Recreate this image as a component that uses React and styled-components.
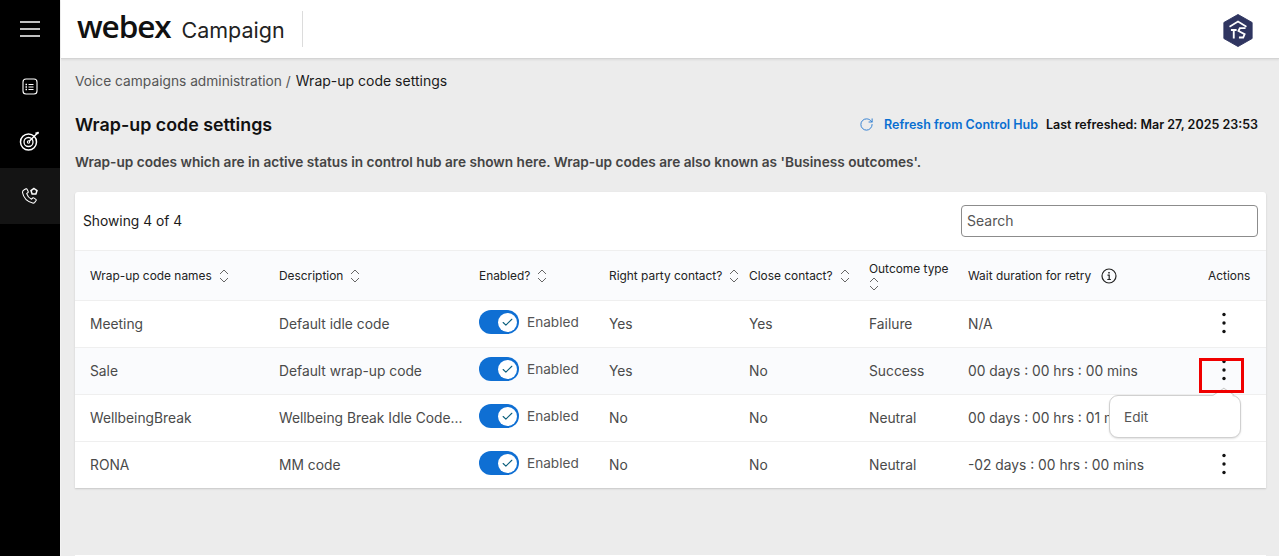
import React from 'react';
import styled, { createGlobalStyle } from 'styled-components';
import { Check, RotateCw } from 'lucide-react';

const GlobalStyle = createGlobalStyle`
  html, body {
    margin: 0;
    height: 100%;
    overflow: hidden;
    background: #ececec;
    font-family: Inter, "Liberation Sans", sans-serif;
  }
  * { box-sizing: border-box; }
`;

const Shell = styled.div`
  display: flex;
  width: 1279px;
  height: 556px;
  overflow: hidden;
`;

const Sidebar = styled.nav`
  flex: 0 0 60px;
  background: #000;
  display: flex;
  flex-direction: column;
`;

const NavItem = styled.div`
  height: ${(p) => p.$height || 56}px;
  background: ${(p) => (p.$active ? '#141414' : 'transparent')};
  display: flex;
  align-items: center;
  justify-content: center;
  color: #fff;
`;

const Main = styled.div`
  flex: 1;
  min-width: 0;
  display: flex;
  flex-direction: column;
  border-left: 1px solid #f3f3f3;
`;

const TopBar = styled.header`
  height: 59px;
  flex: none;
  background: #fff;
  border-bottom: 1px solid #d4d4d4;
  box-shadow: 0 1px 2px rgba(0, 0, 0, 0.08);
  display: flex;
  align-items: center;
  padding: 0 25px 0 16px;
`;

const Brand = styled.div`
  display: flex;
  align-items: baseline;
  height: 36px;
  padding-right: 17px;
  border-right: 1px solid #dcdcdc;
  color: #111;
`;

const BrandMark = styled.span`
  font-size: 31.5px;
  line-height: 30px;
  font-weight: 600;
  letter-spacing: -1.1px;
  font-family: "Open Sans", Inter, sans-serif;
`;

const BrandName = styled.span`
  font-size: 21.5px;
  line-height: 36px;
  margin-left: 11px;
  color: #222;
`;

const Avatar = styled.div`
  margin-left: auto;
  margin-top: 3px;
  display: flex;
`;

const Content = styled.div`
  padding: 0 13px 0 14px;
`;

const Breadcrumb = styled.div`
  height: 44px;
  padding-top: 13px;
  display: flex;
  align-items: baseline;
  font-size: 13.75px;
  color: #555;

  b {
    font-size: 14px;
    font-weight: 400;
    color: #1a1a1a;
    margin-left: 5px;
  }
`;

const TitleRow = styled.div`
  display: flex;
  align-items: center;
  height: 42px;
`;

const Title = styled.h1`
  margin: 0;
  font-size: 17.85px;
  font-weight: 600;
  color: #111;
`;

const Refresh = styled.div`
  margin-left: auto;
  padding-right: 8px;
  display: flex;
  align-items: center;
  font-size: 12.5px;
  font-weight: 600;
  color: #111;
`;

const RefreshLink = styled.span`
  color: #0a6fd1;
  margin: 0 8px 0 10px;
`;

const Note = styled.p`
  margin: 0;
  height: 34px;
  display: flex;
  align-items: center;
  font-size: 13.65px;
  font-weight: 600;
  color: #444;
`;

const Card = styled.section`
  margin-top: 13px;
  background: #fff;
  border-radius: 3px 3px 0 0;
  box-shadow: 0 1px 2px rgba(0, 0, 0, 0.16);
`;

const Toolbar = styled.div`
  height: 58px;
  display: flex;
  align-items: center;
  justify-content: space-between;
  padding: 0 8px 1px 8px;
  font-size: 13.8px;
  color: #1a1a1a;
`;

const SearchBox = styled.div`
  width: 297px;
  height: 32px;
  margin-top: 1px;
  border: 1px solid #8c8c8c;
  border-radius: 4px;
  display: flex;
  align-items: center;
  padding: 0 0 1px 5px;
  font-size: 14px;
  color: #555;
`;

const Row = styled.div`
  display: grid;
  grid-template-columns: 189px 200px 130px 140px 120px 99px 240px 71px;
  height: ${(p) => (p.$head ? 50 : 47)}px;
  background: ${(p) => (p.$tinted ? '#fafbfd' : '#fff')};
  border-top: 1px solid #efefef;
  align-items: center;
`;

const Cell = styled.div`
  position: relative;
  padding-left: 15px;
  font-size: 13.8px;
  color: #4a4a4a;
  white-space: nowrap;
  display: flex;
  align-items: center;
`;

const HeadCell = styled(Cell)`
  font-size: 11.9px;
  color: #222;
  gap: 7px;
  flex-wrap: ${(p) => (p.$stacked ? 'wrap' : 'nowrap')};
  row-gap: 1px;

  svg {
    flex: none;
  }
`;

const SwitchTrack = styled.span`
  width: 40px;
  height: 24px;
  margin: -4px 8px 0 0;
  border-radius: 12px;
  background: #0f6fd3;
  display: flex;
  align-items: center;
  justify-content: flex-end;
  padding-right: 2px;
`;

const SwitchKnob = styled.span`
  width: 19px;
  height: 19px;
  border-radius: 50%;
  background: #fff;
  display: flex;
  align-items: center;
  justify-content: center;
  color: #0b5f7d;
`;

const SwitchLabel = styled.span`
  font-size: 13.6px;
  color: #555;
  margin-top: -4px;
`;

const KebabButton = styled.span`
  display: flex;
  margin: -2px 0 0 13px;
`;

const Marker = styled.span`
  position: absolute;
  z-index: 3;
  left: 6px;
  top: -3px;
  width: 45px;
  height: 35px;
  border: 3px solid #f00000;
`;

const Popover = styled.div`
  position: absolute;
  z-index: 2;
  right: 23px;
  top: 34px;
  width: 132px;
  height: 43px;
  background: #fff;
  border: 1.5px solid #d0d0d0;
  border-radius: 9px;
  box-shadow: 0 1px 2px rgba(0, 0, 0, 0.12);
  display: flex;
  align-items: center;
  padding-left: 14px;
  font-size: 13.6px;
  color: #555;

  &::before {
    content: '';
    position: absolute;
    right: 11px;
    top: -8px;
    width: 11px;
    height: 13px;
    background: #fff;
    border-top: 1.5px solid #c8c8c8;
    border-left: 1.5px solid #c8c8c8;
    transform: rotate(45deg) skew(-12deg, -12deg);
  }
`;

const PageFoot = styled.div`
  height: 1px;
  margin-top: 67px;
  background: #fff;
`;

const SortIcon = () => (
  <svg width="10" height="14" viewBox="0 0 10 14" fill="none" stroke="#666" strokeWidth="1">
    <path d="M1 5l4-4 4 4M1 9l4 4 4-4" />
  </svg>
);

const KebabIcon = () => (
  <svg width="6" height="22" viewBox="0 0 6 22" fill="#111">
    <circle cx="3" cy="2.500" r="1.700" />
    <circle cx="3" cy="11" r="1.700" />
    <circle cx="3" cy="19.500" r="1.700" />
  </svg>
);

const MenuIcon = () => (
  <svg width="20" height="16" viewBox="0 0 20 16" stroke="#fff" strokeWidth="1.6">
    <path d="M0 1h20M0 8h20M0 15h20" />
  </svg>
);

const ListIcon = () => (
  <svg width="16" height="17" viewBox="0 0 16 17" fill="none" stroke="#fff" strokeWidth="1.1">
    <rect x="1" y="1" width="14" height="15" rx="3" />
    <path d="M6.500 6.500h5M6.500 9h5M6.500 11.500h5" />
    <path d="M3.500 6.500h1.500M3.500 9h1.500M3.500 11.500h1.500" strokeWidth="1.400" />
  </svg>
);

const TargetIcon = () => (
  <svg width="22" height="22" viewBox="0 0 22 22" fill="none" stroke="#fff">
    <circle cx="9.500" cy="12" r="8" strokeWidth="1.500" />
    <circle cx="9.500" cy="12" r="4.500" strokeWidth="1.300" />
    <circle cx="9.500" cy="12" r="1.200" strokeWidth="1.100" />
    <path d="M10 11.500L19.500 2" strokeWidth="1.500" />
    <path d="M16.500 3.500l3-.5" strokeWidth="2" />
  </svg>
);

const PhoneIcon = () => (
  <svg width="18" height="18" viewBox="0 0 18 18" fill="none" stroke="#fff" strokeWidth="1.100">
    <path d="M3.200 2.800L5 1.800c.4-.2.800 0 1 .4l1.200 2.300c.2.400.1.800-.2 1L5.700 6.600c.7 2.300 2.500 4.500 4.800 5.600l1.200-1.200c.3-.3.700-.3 1-.1l2.200 1.500c.4.300.5.800.2 1.100l-1.400 1.800c-.5.600-1.300.9-2.100.7C6.500 14.700 2.500 10.500 1.500 5.500c-.2-1.100.6-2.100 1.700-2.700z" />
    <path d="M13 1.500l3 2.100-1.100 3.300h-3.800L10 3.600z" strokeWidth="1.500" />
  </svg>
);

const HexLogo = () => (
  <svg width="32" height="35" viewBox="0 0 34 36">
    <path d="M17 1L32 9.500V26.500L17 35L2 26.500V9.500z" fill="#2f3560" stroke="#2f3560" strokeLinejoin="round" />
    <path d="M8 14L17 8.500l9 5.500" fill="none" stroke="#fff" strokeWidth="1.800" />
    <path d="M9.500 17.500h6M12.500 17.500v9" fill="none" stroke="#fff" strokeWidth="2" />
    <path d="M25 15.500h-6l-1.500 3 6.500 3.500-1.500 3.500H18" fill="none" stroke="#fff" strokeWidth="2" />
  </svg>
);

const InfoIcon = () => (
  <svg width="16" height="16" viewBox="0 0 16 16" fill="none" stroke="#222" strokeWidth="1.200">
    <circle cx="8" cy="8" r="7" />
    <path d="M6.500 7.200H8.200V11.500M6.300 11.500h3.600" />
    <path d="M8 4v1.400" strokeWidth="1.500" />
  </svg>
);

const columns = [
  'Wrap-up code names',
  'Description',
  'Enabled?',
  'Right party contact?',
  'Close contact?',
];

const rows = [
  { name: 'Meeting', description: 'Default idle code', rpc: 'Yes', close: 'Yes', outcome: 'Failure', wait: 'N/A' },
  { name: 'Sale', description: 'Default wrap-up code', rpc: 'Yes', close: 'No', outcome: 'Success', wait: '00 days : 00 hrs : 00 mins', open: true },
  { name: 'WellbeingBreak', description: 'Wellbeing Break Idle Code...', rpc: 'No', close: 'No', outcome: 'Neutral', wait: '00 days : 00 hrs : 01 mins', hidden: true },
  { name: 'RONA', description: 'MM code', rpc: 'No', close: 'No', outcome: 'Neutral', wait: '-02 days : 00 hrs : 00 mins' },
];

const App = () => (
  <Shell>
    <GlobalStyle />
    <Sidebar>
      <NavItem $height={58}><MenuIcon /></NavItem>
      <NavItem><ListIcon /></NavItem>
      <NavItem $height={54}><TargetIcon /></NavItem>
      <NavItem $active><PhoneIcon /></NavItem>
    </Sidebar>
    <Main>
      <TopBar>
        <Brand>
          <BrandMark>webex</BrandMark>
          <BrandName>Campaign</BrandName>
        </Brand>
        <Avatar><HexLogo /></Avatar>
      </TopBar>
      <Content>
        <Breadcrumb>
          Voice campaigns administration&nbsp;/<b>Wrap-up code settings</b>
        </Breadcrumb>
        <TitleRow>
          <Title>Wrap-up code settings</Title>
          <Refresh>
            <RotateCw size={15} color="#2a7bd0" strokeWidth={1.5} />
            <RefreshLink>Refresh from Control Hub</RefreshLink>
            Last refreshed: Mar 27, 2025 23:53
          </Refresh>
        </TitleRow>
        <Note>Wrap-up codes which are in active status in control hub are shown here. Wrap-up codes are also known as 'Business outcomes'.</Note>
        <Card>
          <Toolbar>
            <span>Showing 4 of 4</span>
            <SearchBox>Search</SearchBox>
          </Toolbar>
          <Row $head $tinted>
            {columns.map((label) => (
              <HeadCell key={label}>{label}<SortIcon /></HeadCell>
            ))}
            <HeadCell $stacked>Outcome type<SortIcon /></HeadCell>
            <HeadCell>Wait duration for retry&nbsp;<InfoIcon /></HeadCell>
            <HeadCell>Actions</HeadCell>
          </Row>
          {rows.map((row) => (
            <Row key={row.name} $tinted={row.open}>
              <Cell>{row.name}</Cell>
              <Cell>{row.description}</Cell>
              <Cell>
                <SwitchTrack>
                  <SwitchKnob><Check size={13} strokeWidth={2} /></SwitchKnob>
                </SwitchTrack>
                <SwitchLabel>Enabled</SwitchLabel>
              </Cell>
              <Cell>{row.rpc}</Cell>
              <Cell>{row.close}</Cell>
              <Cell>{row.outcome}</Cell>
              <Cell>{row.wait}</Cell>
              <Cell>
                {!row.hidden && (
                  <KebabButton><KebabIcon /></KebabButton>
                )}
                {row.open && <Marker />}
                {row.open && <Popover>Edit</Popover>}
              </Cell>
            </Row>
          ))}
        </Card>
        <PageFoot />
      </Content>
    </Main>
  </Shell>
);

export default App;
